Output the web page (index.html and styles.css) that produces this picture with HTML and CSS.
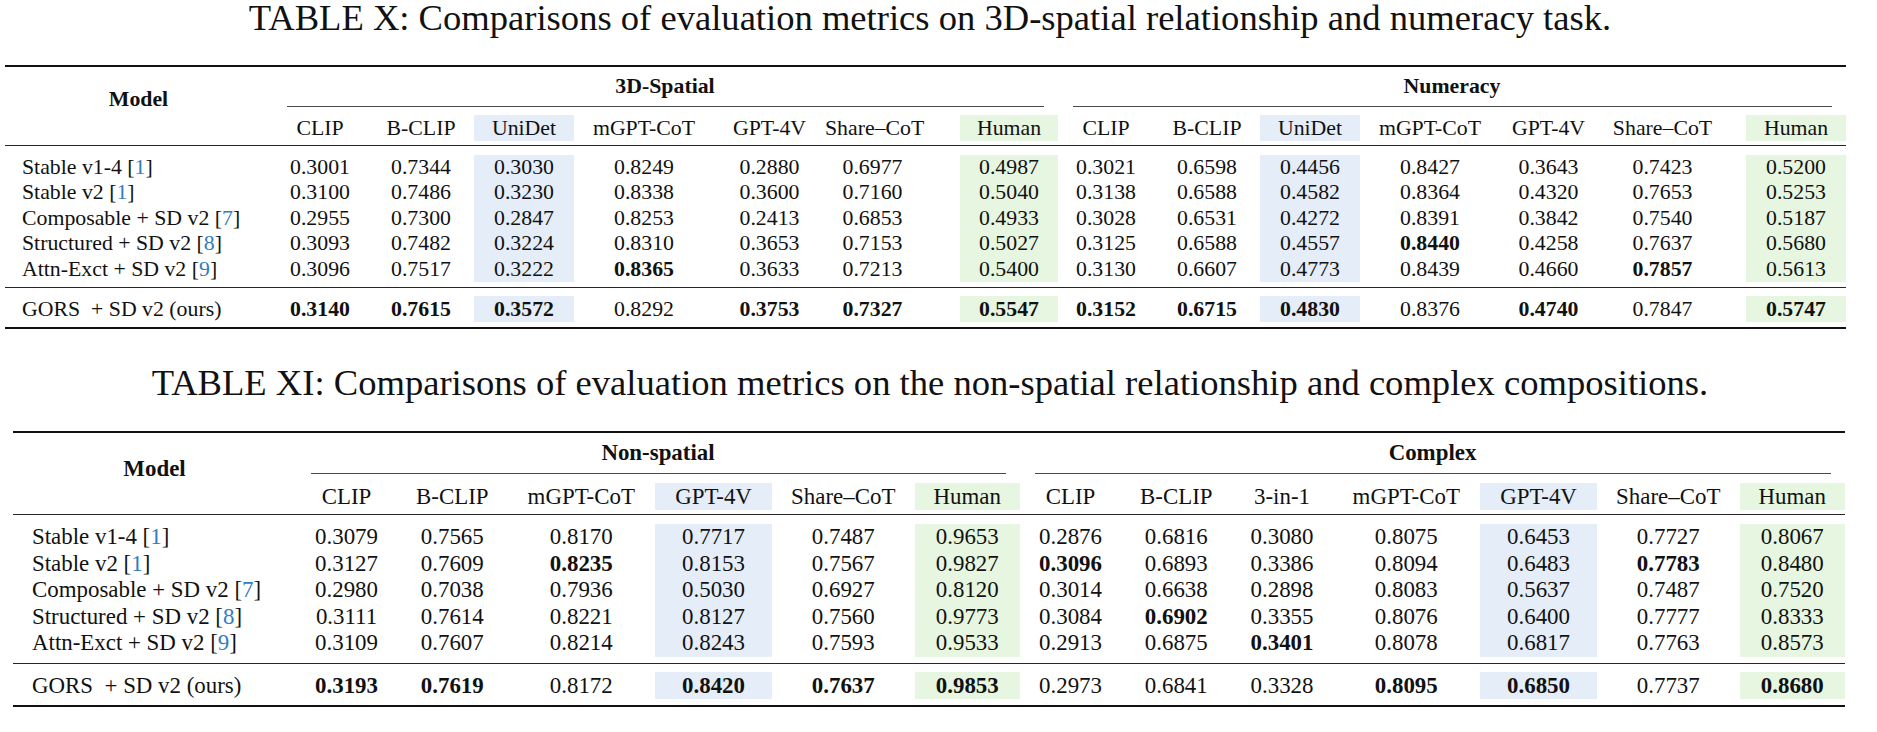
FILE: index.html
```html
<!DOCTYPE html>
<html lang="en">
<head>
<meta charset="utf-8">
<title>Tables X and XI</title>
<link rel="stylesheet" href="styles.css">
</head>
<body>
<div class="page">
  <div class="caption cap1">TABLE X: Comparisons of evaluation metrics on 3D-spatial relationship and numeracy task.</div>
  <table class="tbl t1">
    <colgroup>
      <col class="c-model"><col class="c-clip"><col class="c-bclip"><col class="c-unidet"><col class="c-mgpt"><col class="c-gpt4v"><col class="c-share"><col class="c-human-a">
      <col class="c-clip"><col class="c-bclip"><col class="c-unidet"><col class="c-mgpt"><col class="c-gpt4v"><col class="c-share"><col class="c-human">
    </colgroup>
    <tr class="r-top"><td colspan="15"><div class="line heavy"></div></td></tr>
    <tr class="r-group">
      <td class="model-head" rowspan="3">Model</td>
      <td class="group" colspan="7">3D-Spatial</td>
      <td class="group" colspan="7">Numeracy</td>
    </tr>
    <tr class="r-cmid">
      <td colspan="7"><div class="line cmid"></div></td>
      <td colspan="7"><div class="line cmid"></div></td>
    </tr>
    <tr class="r-head">
      <td>CLIP</td><td>B-CLIP</td><td class="hb">UniDet</td><td>mGPT-CoT</td><td>GPT-4V</td><td class="sh3">Share–CoT</td><td class="hg">Human</td>
      <td>CLIP</td><td>B-CLIP</td><td class="hb">UniDet</td><td>mGPT-CoT</td><td class="g4">GPT-4V</td><td class="sh">Share–CoT</td><td class="hg">Human</td>
    </tr>
    <tr class="r-sep"><td colspan="15"><div class="line"></div></td></tr>
    <tr class="r-data">
      <td class="name">Stable v1-4 [<span class="ref">1</span>]</td>
      <td>0.3001</td><td>0.7344</td><td class="hb">0.3030</td><td>0.8249</td><td>0.2880</td><td class="sh3">0.6977</td><td class="hg">0.4987</td>
      <td>0.3021</td><td>0.6598</td><td class="hb">0.4456</td><td>0.8427</td><td class="g4">0.3643</td><td class="sh">0.7423</td><td class="hg">0.5200</td>
    </tr>
    <tr class="r-data">
      <td class="name">Stable v2 [<span class="ref">1</span>]</td>
      <td>0.3100</td><td>0.7486</td><td class="hb">0.3230</td><td>0.8338</td><td>0.3600</td><td class="sh3">0.7160</td><td class="hg">0.5040</td>
      <td>0.3138</td><td>0.6588</td><td class="hb">0.4582</td><td>0.8364</td><td class="g4">0.4320</td><td class="sh">0.7653</td><td class="hg">0.5253</td>
    </tr>
    <tr class="r-data">
      <td class="name">Composable + SD v2 [<span class="ref">7</span>]</td>
      <td>0.2955</td><td>0.7300</td><td class="hb">0.2847</td><td>0.8253</td><td>0.2413</td><td class="sh3">0.6853</td><td class="hg">0.4933</td>
      <td>0.3028</td><td>0.6531</td><td class="hb">0.4272</td><td>0.8391</td><td class="g4">0.3842</td><td class="sh">0.7540</td><td class="hg">0.5187</td>
    </tr>
    <tr class="r-data">
      <td class="name">Structured + SD v2 [<span class="ref">8</span>]</td>
      <td>0.3093</td><td>0.7482</td><td class="hb">0.3224</td><td>0.8310</td><td>0.3653</td><td class="sh3">0.7153</td><td class="hg">0.5027</td>
      <td>0.3125</td><td>0.6588</td><td class="hb">0.4557</td><td class="b">0.8440</td><td class="g4">0.4258</td><td class="sh">0.7637</td><td class="hg">0.5680</td>
    </tr>
    <tr class="r-data">
      <td class="name">Attn-Exct + SD v2 [<span class="ref">9</span>]</td>
      <td>0.3096</td><td>0.7517</td><td class="hb">0.3222</td><td class="b">0.8365</td><td>0.3633</td><td class="sh3">0.7213</td><td class="hg">0.5400</td>
      <td>0.3130</td><td>0.6607</td><td class="hb">0.4773</td><td>0.8439</td><td class="g4">0.4660</td><td class="sh b">0.7857</td><td class="hg">0.5613</td>
    </tr>
    <tr class="r-sep2"><td colspan="15"><div class="line"></div></td></tr>
    <tr class="r-gors">
      <td class="name">GORS&nbsp; + SD v2 (ours)</td>
      <td class="b">0.3140</td><td class="b">0.7615</td><td class="hb b">0.3572</td><td>0.8292</td><td class="b">0.3753</td><td class="sh3 b">0.7327</td><td class="hg b">0.5547</td>
      <td class="b">0.3152</td><td class="b">0.6715</td><td class="hb b">0.4830</td><td>0.8376</td><td class="g4 b">0.4740</td><td class="sh">0.7847</td><td class="hg b">0.5747</td>
    </tr>
    <tr class="r-bot"><td colspan="15"><div class="line heavy"></div></td></tr>
  </table>

  <div class="caption cap2">TABLE XI: Comparisons of evaluation metrics on the non-spatial relationship and complex compositions.</div>
  <table class="tbl t2">
    <colgroup>
      <col class="c-model"><col class="c-clip"><col class="c-bclip"><col class="c-mgpt"><col class="c-gpt4v"><col class="c-share"><col class="c-human">
      <col class="c-clip"><col class="c-bclip"><col class="c-3in1"><col class="c-mgpt"><col class="c-gpt4v"><col class="c-share"><col class="c-human">
    </colgroup>
    <tr class="r-top"><td colspan="14"><div class="line heavy"></div></td></tr>
    <tr class="r-group">
      <td class="model-head" rowspan="3">Model</td>
      <td class="group" colspan="6">Non-spatial</td>
      <td class="group" colspan="7">Complex</td>
    </tr>
    <tr class="r-cmid">
      <td colspan="6"><div class="line cmid"></div></td>
      <td colspan="7"><div class="line cmid"></div></td>
    </tr>
    <tr class="r-head">
      <td>CLIP</td><td>B-CLIP</td><td>mGPT-CoT</td><td class="hb">GPT-4V</td><td>Share–CoT</td><td class="hg">Human</td>
      <td>CLIP</td><td>B-CLIP</td><td>3-in-1</td><td>mGPT-CoT</td><td class="hb">GPT-4V</td><td>Share–CoT</td><td class="hg">Human</td>
    </tr>
    <tr class="r-sep"><td colspan="14"><div class="line"></div></td></tr>
    <tr class="r-data">
      <td class="name">Stable v1-4 [<span class="ref">1</span>]</td>
      <td>0.3079</td><td>0.7565</td><td>0.8170</td><td class="hb">0.7717</td><td>0.7487</td><td class="hg">0.9653</td>
      <td>0.2876</td><td>0.6816</td><td>0.3080</td><td>0.8075</td><td class="hb">0.6453</td><td>0.7727</td><td class="hg">0.8067</td>
    </tr>
    <tr class="r-data">
      <td class="name">Stable v2 [<span class="ref">1</span>]</td>
      <td>0.3127</td><td>0.7609</td><td class="b">0.8235</td><td class="hb">0.8153</td><td>0.7567</td><td class="hg">0.9827</td>
      <td class="b">0.3096</td><td>0.6893</td><td>0.3386</td><td>0.8094</td><td class="hb">0.6483</td><td class="b">0.7783</td><td class="hg">0.8480</td>
    </tr>
    <tr class="r-data">
      <td class="name">Composable + SD v2 [<span class="ref">7</span>]</td>
      <td>0.2980</td><td>0.7038</td><td>0.7936</td><td class="hb">0.5030</td><td>0.6927</td><td class="hg">0.8120</td>
      <td>0.3014</td><td>0.6638</td><td>0.2898</td><td>0.8083</td><td class="hb">0.5637</td><td>0.7487</td><td class="hg">0.7520</td>
    </tr>
    <tr class="r-data">
      <td class="name">Structured + SD v2 [<span class="ref">8</span>]</td>
      <td>0.3111</td><td>0.7614</td><td>0.8221</td><td class="hb">0.8127</td><td>0.7560</td><td class="hg">0.9773</td>
      <td>0.3084</td><td class="b">0.6902</td><td>0.3355</td><td>0.8076</td><td class="hb">0.6400</td><td>0.7777</td><td class="hg">0.8333</td>
    </tr>
    <tr class="r-data">
      <td class="name">Attn-Exct + SD v2 [<span class="ref">9</span>]</td>
      <td>0.3109</td><td>0.7607</td><td>0.8214</td><td class="hb">0.8243</td><td>0.7593</td><td class="hg">0.9533</td>
      <td>0.2913</td><td>0.6875</td><td class="b">0.3401</td><td>0.8078</td><td class="hb">0.6817</td><td>0.7763</td><td class="hg">0.8573</td>
    </tr>
    <tr class="r-sep2"><td colspan="14"><div class="line"></div></td></tr>
    <tr class="r-gors">
      <td class="name">GORS&nbsp; + SD v2 (ours)</td>
      <td class="b">0.3193</td><td class="b">0.7619</td><td>0.8172</td><td class="hb b">0.8420</td><td class="b">0.7637</td><td class="hg b">0.9853</td>
      <td>0.2973</td><td>0.6841</td><td>0.3328</td><td class="b">0.8095</td><td class="hb b">0.6850</td><td>0.7737</td><td class="hg b">0.8680</td>
    </tr>
    <tr class="r-bot"><td colspan="14"><div class="line heavy"></div></td></tr>
  </table>
</div>
</body>
</html>
```

FILE: styles.css
```css
html, body {
  margin: 0;
  padding: 0;
  background: #ffffff;
}

body {
  font-family: "Liberation Serif", "Times New Roman", serif;
  color: #111111;
}

.page {
  width: 1860px;
}

.caption {
  text-align: center;
  font-size: 36.6px;
  line-height: 36px;
  height: 36px;
  white-space: nowrap;
  color: #111111;
}

.cap2 {
  margin-top: 36px;
}

.tbl {
  border-collapse: separate;
  border-spacing: 0;
  table-layout: fixed;
}

.tbl td {
  padding: 0;
  text-align: center;
  white-space: nowrap;
  vertical-align: middle;
}

.line {
  height: 1px;
  background: #262626;
}

.line.heavy {
  height: 2px;
  background: #111111;
}

.line.cmid {
  background: #4a4a4a;
  margin: 0 14px 0 15px;
}

.r-top td,
.r-cmid td,
.r-sep td,
.r-sep2 td,
.r-bot td {
  font-size: 0;
  line-height: 0;
}

.model-head,
.group {
  font-weight: bold;
}

.tbl td.model-head {
  vertical-align: top;
}

.tbl td.name {
  text-align: left;
}

.b {
  font-weight: bold;
}

.hb {
  background: #e4edf8;
}

.hg {
  background: #e6f6e0;
}

.ref {
  color: #2f7dbf;
}

/* ---------- Table X ---------- */
.t1 {
  margin-top: 29px;
  margin-left: 5px;
  width: 1841px;
  font-size: 21.8px;
}

.t1 .c-model { width: 267px; }
.t1 .c-clip { width: 96px; }
.t1 .c-bclip { width: 106px; }
.t1 .c-unidet { width: 100px; }
.t1 .c-mgpt { width: 140px; }
.t1 .c-gpt4v { width: 111px; }
.t1 .c-share { width: 135px; }
.t1 .c-human-a { width: 98px; }
.t1 .c-human { width: 100px; }

/* some entries sit a little left of their column centre */
.t1 td.g4 {
  padding-right: 14px;
}

.t1 td.sh {
  padding-right: 32px;
}

.t1 td.sh3 {
  padding-right: 40px;
}

.t1 td.model-head {
  padding-top: 20px;
  line-height: 25px;
}

.t1 .r-group td.group {
  height: 39px;
  line-height: 39px;
}

.t1 .r-cmid td {
  padding-bottom: 8px;
}

.t1 .r-head td {
  height: 26px;
  line-height: 26px;
}

.t1 .r-sep td {
  padding: 4px 0 9px;
}

.t1 .r-data td {
  height: 25.4px;
  line-height: 25.4px;
}

.t1 td.name {
  padding-left: 17px;
}

.t1 .r-sep2 td {
  padding: 5px 0 8px;
}

.t1 .r-gors td {
  height: 26px;
  line-height: 26px;
}

.t1 .r-bot td {
  padding-top: 5px;
}

/* ---------- Table XI ---------- */
.t2 {
  margin-top: 30px;
  margin-left: 13px;
  width: 1832px;
  font-size: 22.9px;
}

.t2 .c-model { width: 283px; }
.t2 .c-clip { width: 101px; }
.t2 .c-bclip { width: 110.5px; }
.t2 .c-3in1 { width: 101px; }
.t2 .c-mgpt { width: 147.5px; }
.t2 .c-gpt4v { width: 117px; }
.t2 .c-share { width: 142.5px; }
.t2 .c-human { width: 105.5px; }

.t2 td.model-head {
  padding-top: 23px;
  line-height: 26px;
}

.t2 .r-group td.group {
  height: 40px;
  line-height: 40px;
}

.t2 .r-cmid td {
  padding-bottom: 9px;
}

.t2 .r-head td {
  height: 27px;
  line-height: 27px;
}

.t2 .r-sep td {
  padding: 4px 0 9px;
}

.t2 .r-data td {
  height: 26.6px;
  line-height: 26.6px;
}

.t2 td.name {
  padding-left: 19px;
}

.t2 .r-sep2 td {
  padding: 6px 0 8px;
}

.t2 .r-gors td {
  height: 27px;
  line-height: 27px;
}

.t2 .r-bot td {
  padding-top: 6px;
}
```
